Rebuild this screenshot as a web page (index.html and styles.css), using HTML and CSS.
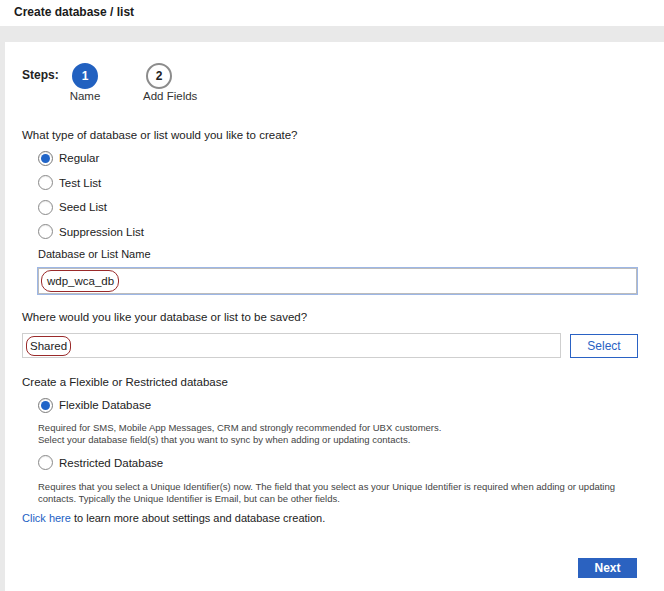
FILE: index.html
```html
<!DOCTYPE html>
<html>
<head>
<meta charset="utf-8">
<link rel="stylesheet" href="styles.css">
</head>
<body>
<div class="header">Create database / list</div>
<div class="band"></div>
<div class="main">
  <div class="panel">
    <div class="steps">
      <div class="steps-label">Steps:</div>
      <div class="step step-one">
        <div class="circle active">1</div>
        <div class="step-name">Name</div>
      </div>
      <div class="step step-two">
        <div class="circle">2</div>
        <div class="step-name">Add Fields</div>
      </div>
    </div>

    <div class="question q-type">What type of database or list would you like to create?</div>
    <div class="radios">
      <div class="radio-row"><span class="radio checked"></span><span class="radio-label">Regular</span></div>
      <div class="radio-row"><span class="radio"></span><span class="radio-label">Test List</span></div>
      <div class="radio-row"><span class="radio"></span><span class="radio-label">Seed List</span></div>
      <div class="radio-row"><span class="radio"></span><span class="radio-label">Suppression List</span></div>
    </div>
    <div class="name-block">
      <div class="field-label">Database or List Name</div>
      <div class="input focused"><span class="mark">wdp_wca_db</span></div>
    </div>

    <div class="question q-where">Where would you like your database or list to be saved?</div>
    <div class="save-row">
      <div class="input plain"><span class="mark mark-small">Shared</span></div>
      <div class="btn-outline">Select</div>
    </div>

    <div class="question q-flex">Create a Flexible or Restricted database</div>
    <div class="db-options">
      <div class="radio-row"><span class="radio checked"></span><span class="radio-label">Flexible Database</span></div>
      <div class="desc">Required for SMS, Mobile App Messages, CRM and strongly recommended for UBX customers.<br>Select your database field(s) that you want to sync by when adding or updating contacts.</div>
      <div class="radio-row"><span class="radio"></span><span class="radio-label">Restricted Database</span></div>
      <div class="desc desc-last">Requires that you select a Unique Identifier(s) now. The field that you select as your Unique Identifier is required when adding or updating contacts. Typically the Unique Identifier is Email, but can be other fields.</div>
    </div>
    <div class="learn"><span class="link">Click here</span> to learn more about settings and database creation.</div>

    <div class="footer">
      <div class="btn-primary">Next</div>
    </div>
  </div>
</div>
</body>
</html>
```

FILE: styles.css
```css
* { box-sizing: border-box; }
html, body { margin: 0; padding: 0; }
body {
  font-family: "Liberation Sans", Arial, Helvetica, sans-serif;
  color: #222;
  background: #ffffff;
  width: 664px;
  height: 591px;
  overflow: hidden;
}
.header {
  height: 26px;
  line-height: 24px;
  padding-left: 14px;
  font-size: 12px;
  font-weight: bold;
  color: #1a1a1a;
  background: #fff;
}
.band {
  height: 16px;
  background: #e9e9e9;
}
.main {
  background: #e9e9e9;
  padding-left: 5px;
  height: 549px;
}
.panel {
  background: #fff;
  height: 100%;
  padding: 21px 27px 0 17px;
}
.steps {
  display: flex;
  align-items: flex-start;
}
.steps-label {
  font-size: 12px;
  font-weight: bold;
  line-height: 25px;
  height: 26px;
  width: 50px;
}
.step {
  display: flex;
  flex-direction: column;
  font-size: 11.5px;
}
.step-one { align-items: center; margin-left: -2px; width: 30px; }
.step-two { align-items: flex-start; margin-left: 43px; }
.step-two .circle { margin-left: 3px; }
.circle {
  width: 26px;
  height: 26px;
  border-radius: 50%;
  border: 2px solid #8c8c8c;
  color: #222;
  font-weight: bold;
  font-size: 12px;
  display: flex;
  align-items: center;
  justify-content: center;
  background: #fff;
}
.circle.active {
  background: #2261c0;
  border-color: #2261c0;
  color: #fff;
}
.step-name {
  line-height: 15px;
  color: #333;
}
.question {
  font-size: 11.5px;
  line-height: 14px;
  color: #222;
}
.q-type { margin-top: 24px; }
.radios {
  margin-top: 4px;
  padding-left: 16px;
}
.radio-row {
  display: flex;
  align-items: center;
  height: 24.5px;
}
.radio {
  width: 15px;
  height: 15px;
  border-radius: 50%;
  border: 1px solid #8a8a8a;
  background: #fff;
  display: inline-block;
  flex: none;
  position: relative;
  box-shadow: inset 0 1px 1px rgba(0,0,0,0.08);
}
.radio.checked {
  border-color: #7a7a7a;
}
.radio.checked::after {
  content: "";
  position: absolute;
  left: 2px;
  top: 2px;
  width: 9px;
  height: 9px;
  border-radius: 50%;
  background: #2165c8;
}
.radio-label {
  margin-left: 6px;
  font-size: 11.5px;
  color: #222;
}
.name-block {
  padding-left: 16px;
  margin-top: 3px;
}
.field-label {
  font-size: 11px;
  line-height: 14px;
  color: #222;
}
.input {
  display: flex;
  align-items: center;
  background: #fff;
  font-size: 11.5px;
  color: #222;
}
.input.focused {
  margin-top: 7px;
  height: 26px;
  border: 1px solid #bcbcbc;
  box-shadow: 0 0 0 1px #9db7e6;
  padding-left: 2px;
}
.mark {
  border: 1px solid #9a2a2a;
  border-radius: 10px;
  padding: 2px 4px 2px 5px;
  line-height: 16px;
}
.q-where { margin-top: 16px; }
.save-row {
  display: flex;
  gap: 9px;
  margin-top: 9px;
  align-items: stretch;
}
.input.plain {
  flex: 1;
  height: 25px;
  border: 1px solid #cfcfcf;
  padding-left: 3px;
}
.mark-small {
  padding: 1px 3px;
  border-radius: 8px;
}
.btn-outline {
  width: 68px;
  height: 24px;
  margin-top: 1px;
  border: 1px solid #2a62c4;
  color: #2a62c4;
  font-size: 12px;
  display: flex;
  align-items: center;
  justify-content: center;
  margin-right: -1px;
}
.q-flex { margin-top: 17px; }
.db-options {
  padding-left: 16px;
  margin-top: 4px;
}
.desc {
  font-size: 9.5px;
  line-height: 12px;
  color: #444;
  margin-top: 4px;
  margin-bottom: 5px;
}
.desc-last { margin-top: 6px; }
.learn {
  font-size: 11px;
  line-height: 14px;
  margin-top: 6px;
  color: #222;
}
.link { color: #1c5fc4; }
.footer {
  display: flex;
  justify-content: flex-end;
  margin-top: 33px;
}
.btn-primary {
  width: 59px;
  height: 20px;
  background: #2b62c0;
  color: #fff;
  font-weight: bold;
  font-size: 12px;
  display: flex;
  align-items: center;
  justify-content: center;
}
```
